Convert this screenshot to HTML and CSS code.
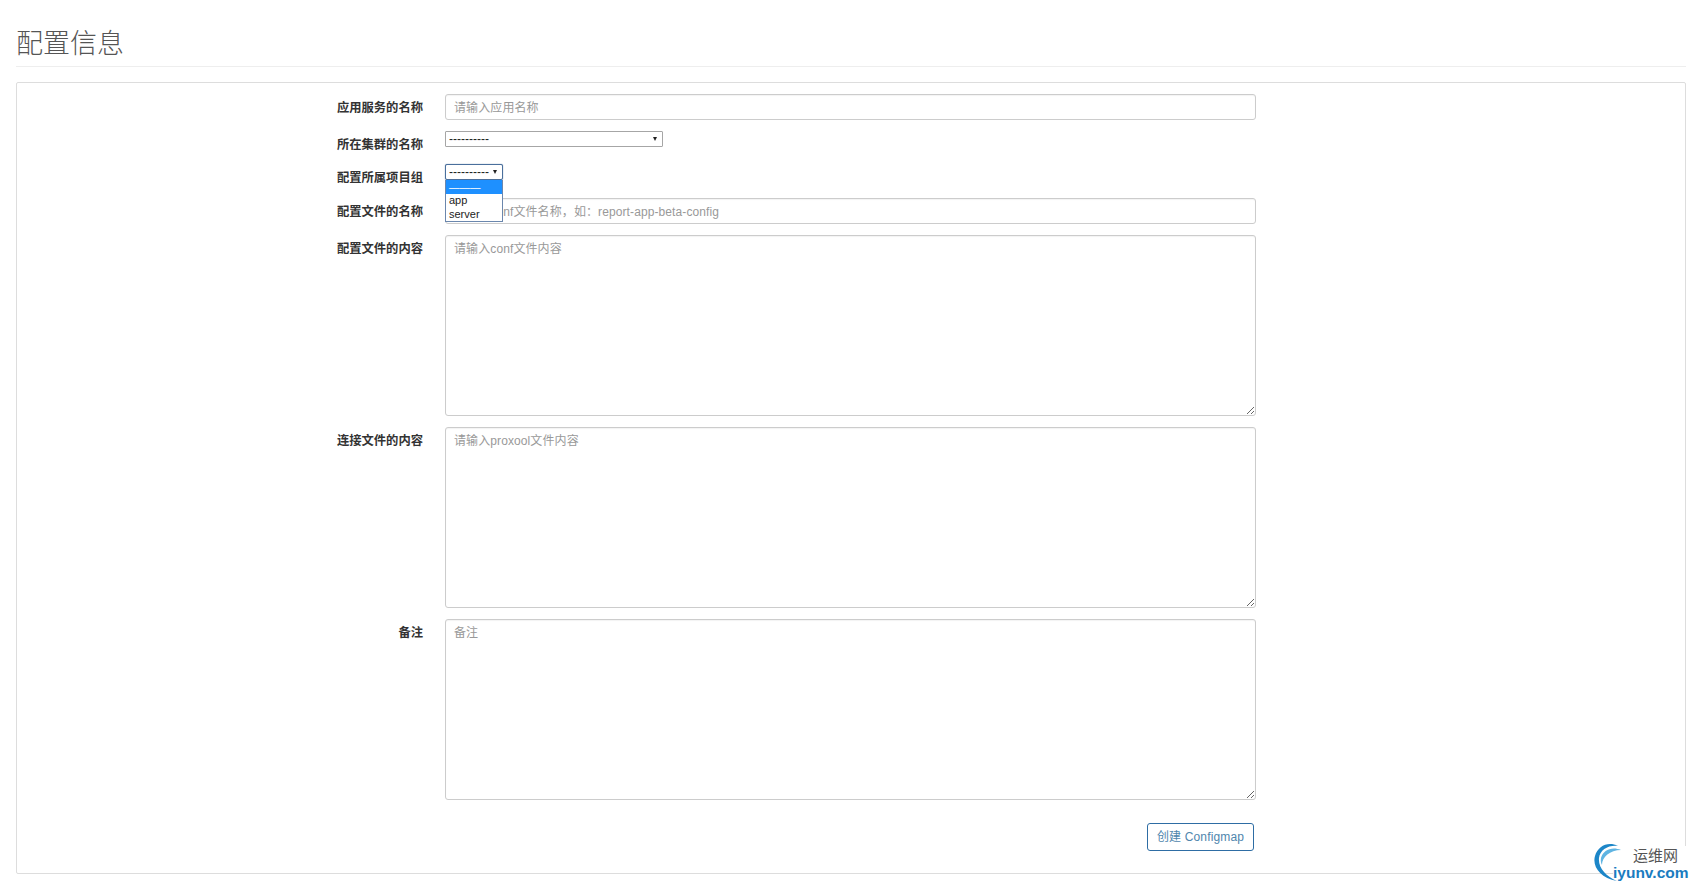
FILE: index.html
```html
<!DOCTYPE html>
<html lang="zh-CN">
<head>
<meta charset="utf-8">
<title>配置信息</title>
<link rel="stylesheet" href="styles.css">
</head>
<body>
<main class="page">
  <h1 class="page-title">配置信息</h1>
  <form class="panel">
    <div class="row">
      <label class="row-label">应用服务的名称</label>
      <input class="control" type="text" placeholder="请输入应用名称">
    </div>
    <div class="row row-select">
      <label class="row-label">所在集群的名称</label>
      <span class="select-wrap select-wide"><select class="select"><option>----------</option></select></span>
    </div>
    <div class="row row-select row-open">
      <label class="row-label">配置所属项目组</label>
      <span class="select-wrap select-narrow">
        <select class="select select-focus"><option>----------</option></select>
        <span class="dropdown">
          <span class="option option-active">———</span>
          <span class="option">app</span>
          <span class="option">server</span>
        </span>
      </span>
    </div>
    <div class="row">
      <label class="row-label">配置文件的名称</label>
      <input class="control" type="text" placeholder="请输入conf文件名称，如：report-app-beta-config">
    </div>
    <div class="row">
      <label class="row-label">配置文件的内容</label>
      <textarea class="control area" placeholder="请输入conf文件内容"></textarea>
    </div>
    <div class="row">
      <label class="row-label">连接文件的内容</label>
      <textarea class="control area" placeholder="请输入proxool文件内容"></textarea>
    </div>
    <div class="row">
      <label class="row-label">备注</label>
      <textarea class="control area" placeholder="备注"></textarea>
    </div>
    <div class="actions">
      <button class="submit" type="button">创建 Configmap</button>
    </div>
  </form>
</main>
<aside class="watermark">
  <span class="wm-cn">运维网</span>
  <span class="wm-en">iyunv.com</span>
  <svg class="swirl" width="48" height="42" viewBox="0 0 48 42" fill="none">
    <path d="M26 4C16 -1 6 4 3 14C0 24 8 36 25 39C14 34 6 26 7 16C8 8 16 3 26 4Z" fill="#1c86c8"/>
    <path d="M29 8C20 4 11 8 9 16C8.500 19 9 21 10 23C10 15 18 8 29 8Z" fill="#5fb4e2"/>
  </svg>
</aside>
</body>
</html>
```
FILE: styles.css
```css
* { box-sizing: border-box; }

body {
  margin: 0;
  background: #fff;
  color: #333;
  font-family: "Liberation Sans", "Noto Sans CJK SC", sans-serif;
  font-size: 12px;
  position: relative;
  height: 889px;
  overflow: hidden;
}

.page { padding: 0 9px 0 16px; }

.page-title {
  margin: 0 0 15px;
  height: 67px;
  padding-top: 24px;
  border-bottom: 1px solid #eee;
  font-family: "Noto Sans CJK SC", sans-serif;
  font-size: 27px;
  line-height: 36px;
  font-weight: 300;
  color: #555;
}

.panel {
  height: 792px;
  border: 1px solid #ddd;
  border-radius: 2px;
  padding-top: 11px;
}

.row {
  display: flex;
  align-items: flex-start;
  margin-bottom: 11px;
}

.row-label {
  width: 406px;
  margin-right: 22px;
  padding-top: 4px;
  text-align: right;
  font-family: "Noto Sans CJK SC", sans-serif;
  font-size: 12.3px;
  line-height: 18px;
  font-weight: 700;
  color: #333;
}

.row-select {
  height: 21px;
  margin-bottom: 12px;
}

.row-open { margin-bottom: 13px; }

.control {
  display: block;
  width: 811px;
  height: 26px;
  padding: 1px 8px 0;
  border: 1px solid #ccc;
  border-radius: 3px;
  background: #fff;
  font-family: "Liberation Sans", "Noto Sans CJK SC", sans-serif;
  font-size: 12px;
  letter-spacing: .1px;
  color: #555;
  box-shadow: inset 0 1px 1px rgba(0, 0, 0, .05);
}

.control::placeholder { color: #999; opacity: 1; }

.area {
  height: 181px;
  padding: 6px 8px;
  line-height: 14px;
  resize: both;
}

.select-wrap {
  position: relative;
  display: block;
  height: 16px;
}

.select-wide { width: 218px; }
.select-narrow { width: 58px; }

.select-wrap::after {
  content: "";
  position: absolute;
  right: 6px;
  top: 6px;
  border-left: 2.5px solid transparent;
  border-right: 2.5px solid transparent;
  border-top: 4px solid #222;
}

.select {
  display: block;
  width: 100%;
  height: 16px;
  padding: 0 0 0 3px;
  border: 1px solid #a6a6a6;
  border-radius: 1px;
  background: #fff;
  font-family: "Liberation Sans", sans-serif;
  font-size: 12px;
  line-height: 14px;
  color: #222;
  appearance: none;
}

.select-focus {
  border-color: #4a6f9c;
  border-radius: 2px;
  box-shadow: 0 0 1px #4a6f9c;
}

.dropdown {
  position: absolute;
  left: 0;
  top: 16px;
  z-index: 2;
  display: block;
  width: 58px;
  height: 42px;
  background: #fff;
  border: 1px solid #6b87ad;
  border-top: 0;
}

.option {
  display: block;
  height: 14px;
  padding-left: 3px;
  font-size: 11px;
  line-height: 13px;
  color: #222;
}

.option-active {
  background: #1e90ff;
  font-size: 10.5px;
  line-height: 14px;
  color: #fff;
}

.actions {
  width: 1237px;
  padding-top: 12px;
  display: flex;
  justify-content: flex-end;
}

.submit {
  width: 107px;
  height: 28px;
  padding: 0 0 4px;
  border: 1px solid #2e6da4;
  border-radius: 3px;
  background: #fff;
  font-family: "Liberation Sans", "Noto Sans CJK SC", sans-serif;
  font-size: 12px;
  letter-spacing: .15px;
  color: #4f86ad;
}

.watermark {
  position: absolute;
  left: 1592px;
  top: 842px;
  width: 100px;
  height: 44px;
}

.swirl {
  position: absolute;
  left: 0;
  top: 0;
}

.wm-cn {
  position: absolute;
  left: 41px;
  top: 4px;
  width: 57px;
  background: #fff;
  font-family: "Noto Sans CJK SC", sans-serif;
  font-size: 15px;
  line-height: 18px;
  color: #555;
}

.wm-en {
  position: absolute;
  left: 21px;
  top: 22px;
  width: 77px;
  background: #fff;
  font-family: "Liberation Sans", sans-serif;
  font-size: 15.5px;
  line-height: 18px;
  font-weight: 700;
  color: #1a7cc0;
}
```
